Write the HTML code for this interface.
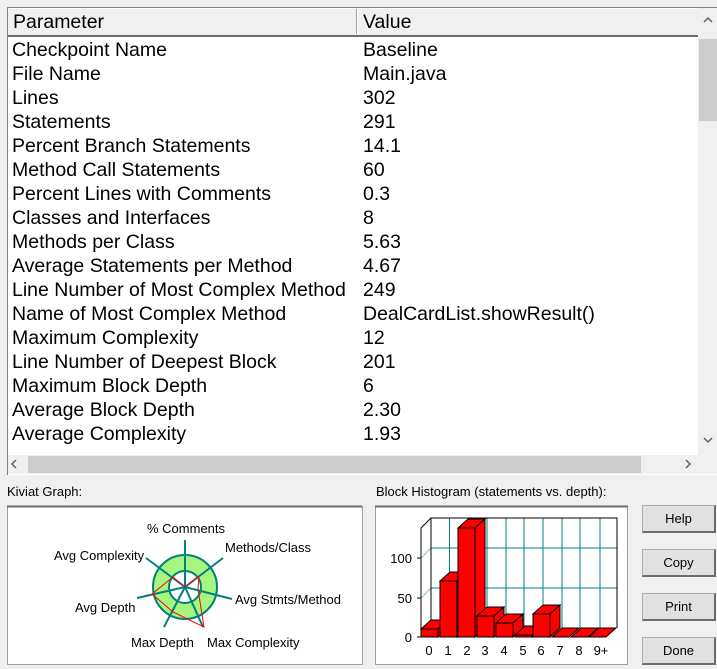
<!DOCTYPE html>
<html><head><style>
body{margin:0;width:717px;height:669px;background:#f0f0f0;font-family:"Liberation Sans",sans-serif;position:relative;overflow:hidden}
.a{position:absolute}
.lv{left:7px;top:7px;width:710px;height:467px;border-left:1px solid #828282;border-top:1px solid #828282;background:#fff}
.hdr{left:8px;top:8px;width:690px;height:26px;background:#f0f0f0;border-top:1px solid #fff;border-bottom:2px solid #6d6d6d}
.hdr span{position:absolute;top:2px;font-size:19.5px}
.row{position:absolute;left:12px;font-size:19.5px;line-height:24px;white-space:nowrap;margin-top:1px}
.v{position:absolute;left:363px;font-size:19.5px;line-height:24px;white-space:nowrap;margin-top:1px}
.btn{position:absolute;left:642px;width:71px;height:25px;background:#e1e1e1;border:1px solid #adadad;border-right:2px solid #6d6d6d;border-bottom:2px solid #6d6d6d;font-size:13px;text-align:center;line-height:25px}
.lbl{font-size:13px}
</style></head><body>
<div class="a lv"></div>
<div class="a hdr"><span style="left:5px">Parameter</span><span style="left:355px">Value</span>
<div class="a" style="left:348px;top:0;width:1px;height:25px;background:#a0a0a0"></div><div class="a" style="left:349px;top:0;width:1px;height:25px;background:#fff"></div></div>
<div class="a" style="left:698px;top:8px;width:19px;height:447px;background:#f0f0f0"></div>
<div class="a" style="left:699px;top:39px;width:18px;height:82px;background:#cdcdcd"></div>
<div class="a" style="left:8px;top:455px;width:709px;height:19px;background:#f0f0f0"></div>
<div class="a" style="left:28px;top:456px;width:613px;height:17px;background:#cdcdcd"></div>
<svg class="a" style="left:0;top:0" width="717" height="480" fill="none" stroke="#606060" stroke-width="1.5">
<polyline points="704,22 708,18 712,22"/><polyline points="704,438 708,442 712,438"/>
<polyline points="16,460 12,464 16,468"/><polyline points="686,460 690,464 686,468"/>
</svg>

<div class="row" style="top:37px">Checkpoint Name</div><div class="v" style="top:37px">Baseline</div>
<div class="row" style="top:61px">File Name</div><div class="v" style="top:61px">Main.java</div>
<div class="row" style="top:85px">Lines</div><div class="v" style="top:85px">302</div>
<div class="row" style="top:109px">Statements</div><div class="v" style="top:109px">291</div>
<div class="row" style="top:133px">Percent Branch Statements</div><div class="v" style="top:133px">14.1</div>
<div class="row" style="top:157px">Method Call Statements</div><div class="v" style="top:157px">60</div>
<div class="row" style="top:181px">Percent Lines with Comments</div><div class="v" style="top:181px">0.3</div>
<div class="row" style="top:205px">Classes and Interfaces</div><div class="v" style="top:205px">8</div>
<div class="row" style="top:229px">Methods per Class</div><div class="v" style="top:229px">5.63</div>
<div class="row" style="top:253px">Average Statements per Method</div><div class="v" style="top:253px">4.67</div>
<div class="row" style="top:277px">Line Number of Most Complex Method</div><div class="v" style="top:277px">249</div>
<div class="row" style="top:301px">Name of Most Complex Method</div><div class="v" style="top:301px">DealCardList.showResult()</div>
<div class="row" style="top:325px">Maximum Complexity</div><div class="v" style="top:325px">12</div>
<div class="row" style="top:349px">Line Number of Deepest Block</div><div class="v" style="top:349px">201</div>
<div class="row" style="top:373px">Maximum Block Depth</div><div class="v" style="top:373px">6</div>
<div class="row" style="top:397px">Average Block Depth</div><div class="v" style="top:397px">2.30</div>
<div class="row" style="top:421px">Average Complexity</div><div class="v" style="top:421px">1.93</div>

<div class="a lbl" style="left:7px;top:484px">Kiviat Graph:</div>
<div class="a lbl" style="left:376px;top:484px">Block Histogram (statements vs. depth):</div>
<div class="btn" style="top:505px">Help</div>
<div class="btn" style="top:549px">Copy</div>
<div class="btn" style="top:593px">Print</div>
<div class="btn" style="top:637px">Done</div>

<svg class="a" style="left:0;top:0" width="717" height="669" font-family="Liberation Sans, sans-serif" font-size="13">
<rect x="7.5" y="506.5" width="355" height="158" fill="#fff" stroke="#a0a0a0"/>
<line x1="7" y1="506.5" x2="362" y2="506.5" stroke="#6d6d6d" stroke-width="2"/>
<circle cx="185" cy="587" r="24" fill="none" stroke="#a6f57e" stroke-width="16"/>
<circle cx="185" cy="587" r="32" fill="none" stroke="#008080" stroke-width="2"/>
<circle cx="185" cy="587" r="16" fill="none" stroke="#008080" stroke-width="2"/>
<g stroke="#008080" stroke-width="2">
<line x1="185" y1="587" x2="185" y2="540"/><line x1="185" y1="587" x2="223" y2="558"/>
<line x1="185" y1="587" x2="232" y2="599"/><line x1="185" y1="587" x2="203" y2="627"/>
<line x1="185" y1="587" x2="164" y2="627"/><line x1="185" y1="587" x2="137" y2="598"/>
<line x1="185" y1="587" x2="146" y2="558"/></g>
<polygon points="185,587 199,576 198,589 204,627 173,612 152,594 173,577" fill="none" stroke="#f00" stroke-width="1"/>
<text x="147" y="533">% Comments</text><text x="225" y="552">Methods/Class</text>
<text x="235" y="604">Avg Stmts/Method</text><text x="207" y="647">Max Complexity</text>
<text x="131" y="647">Max Depth</text><text x="75" y="612">Avg Depth</text>
<text x="54" y="560">Avg Complexity</text>

<rect x="375.5" y="506.5" width="252" height="158" fill="#fff" stroke="#a0a0a0"/>
<line x1="375" y1="506.5" x2="628" y2="506.5" stroke="#6d6d6d" stroke-width="2"/>
<g stroke="#008080" stroke-width="1">
<line x1="431" y1="548" x2="617" y2="548"/><line x1="431" y1="588" x2="617" y2="588"/>
<line x1="449.5" y1="518" x2="449.5" y2="628"/><line x1="468" y1="518" x2="468" y2="628"/><line x1="487" y1="518" x2="487" y2="628"/><line x1="506" y1="518" x2="506" y2="628"/><line x1="524" y1="518" x2="524" y2="628"/><line x1="543" y1="518" x2="543" y2="628"/><line x1="562" y1="518" x2="562" y2="628"/><line x1="580" y1="518" x2="580" y2="628"/><line x1="600" y1="518" x2="600" y2="628"/>
<line x1="421" y1="598" x2="431" y2="588" stroke-dasharray="1,1"/><line x1="421" y1="558" x2="431" y2="548" stroke-dasharray="1,1"/>
</g>
<g stroke="#000" fill="none"><polyline points="431,628 431,518 617,518 617,628"/>
<polyline points="421,528 421,637"/><line x1="421" y1="528" x2="431" y2="518"/>
<line x1="417" y1="598" x2="421" y2="598"/><line x1="417" y1="558" x2="421" y2="558"/><line x1="417" y1="637" x2="421" y2="637"/></g>
<g fill="#f00" stroke="#000" stroke-width="1">
<rect x="421" y="629" width="17" height="8"/><polygon points="421,629 431,620 448,620 438,629"/><polygon points="438,629 448,620 448,628 438,637"/>
<rect x="440" y="581" width="17" height="56"/><polygon points="440,581 450,572 467,572 457,581"/><polygon points="457,581 467,572 467,628 457,637"/>
<rect x="458" y="528" width="17" height="109"/><polygon points="458,528 468,519 485,519 475,528"/><polygon points="475,528 485,519 485,628 475,637"/>
<rect x="477" y="616" width="17" height="21"/><polygon points="477,616 487,607 504,607 494,616"/><polygon points="494,616 504,607 504,628 494,637"/>
<rect x="496" y="623" width="17" height="14"/><polygon points="496,623 506,614 523,614 513,623"/><polygon points="513,623 523,614 523,628 513,637"/>
<rect x="515" y="635" width="17" height="2"/><polygon points="515,635 525,626 542,626 532,635"/><polygon points="532,635 542,626 542,628 532,637"/>
<rect x="533" y="614" width="17" height="23"/><polygon points="533,614 543,605 560,605 550,614"/><polygon points="550,614 560,605 560,628 550,637"/>
<polygon points="552,637 562,628 579,628 569,637"/><polygon points="571,637 581,628 598,628 588,637"/><polygon points="589,637 599,628 616,628 606,637"/>
</g>
<g font-size="13" text-anchor="middle"><text x="429" y="655">0</text><text x="448" y="655">1</text><text x="467" y="655">2</text><text x="485" y="655">3</text><text x="504" y="655">4</text><text x="523" y="655">5</text><text x="541" y="655">6</text><text x="560" y="655">7</text><text x="579" y="655">8</text><text x="601" y="655">9+</text></g>
<g font-size="13" text-anchor="end"><text x="412" y="563">100</text><text x="412" y="603">50</text><text x="412" y="642">0</text></g>
</svg>
</body></html>
